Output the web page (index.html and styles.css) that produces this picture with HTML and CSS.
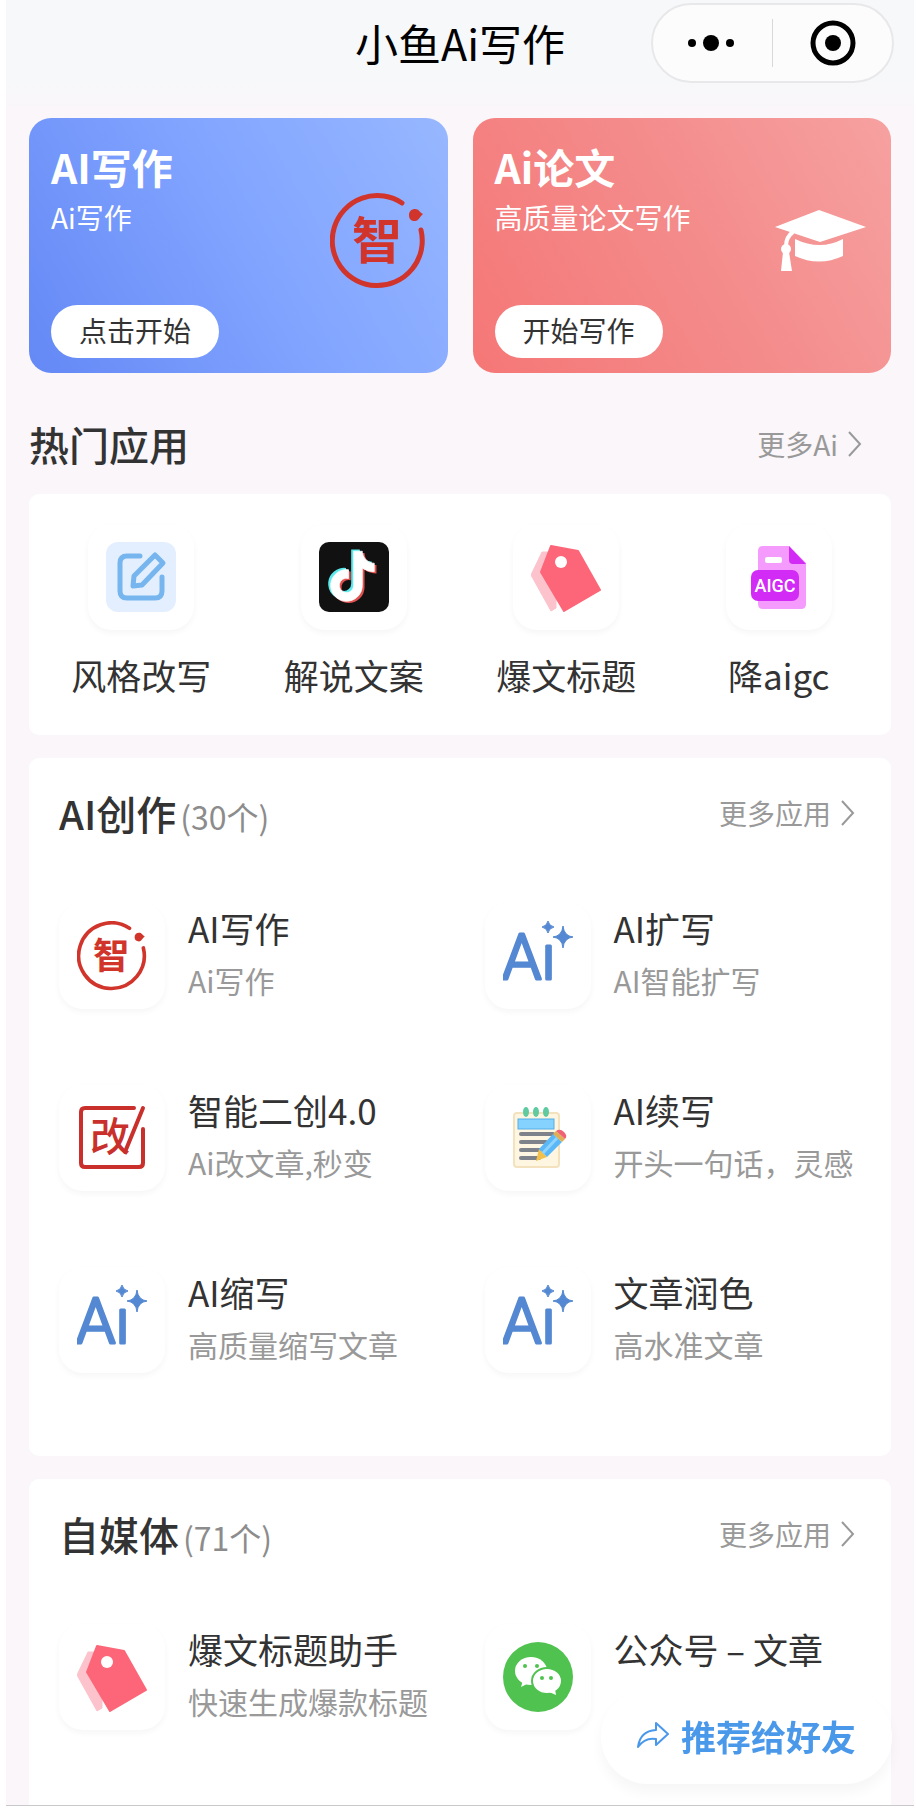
FILE: index.html
```html
<!DOCTYPE html>
<html lang="zh-CN">
<head>
  <meta charset="UTF-8" />
  <meta name="viewport" content="width=device-width, initial-scale=1.0"/>
  <title>小鱼Ai写作</title>
  <link rel="stylesheet" href="styles.css">
</head>
<body>
  <!-- shared icons -->
  <svg class="sprite" aria-hidden="true">
    <symbol id="icon-zhi" viewBox="0 0 96 96">
      <path d="M91 37A45 45 0 1 1 72 10" fill="none" stroke="#d0342a" stroke-width="5" stroke-linecap="round"/>
      <path d="M79 22c0-4 3-6 6-6 4 0 4 3 8 5-3 2-4 7-8 7s-6-2-6-6z" fill="#d0342a"/>
      <text class="seal-text" x="47" y="66" font-size="50" text-anchor="middle" fill="#d0342a">智</text>
    </symbol>
    <symbol id="icon-gai" viewBox="0 0 70 70">
      <path d="M57 5H8q-4 0-4 4v51q0 4 4 4h54q4 0 4-4V26M66 5L48 49" fill="none" stroke="#c9302c" stroke-width="4" stroke-linecap="round"/>
      <text class="edit-text" x="33" y="48" font-size="40" text-anchor="middle" fill="#c9302c">改</text>
    </symbol>
    <symbol id="icon-ai" viewBox="0 0 70 70">
      <text class="ai-text" x="-1" y="58" font-size="63">Aı</text>
      <path d="M60 5q1 10 10 11-9 1-10 11-1-10-10-11 9-1 10-11zM45 0q1 5 6 6-5 1-6 6-1-5-6-6 5-1 6-6z" fill="#5488d2" stroke="#5488d2"/>
    </symbol>
    <symbol id="icon-tag" viewBox="0 0 70 70">
      <path d="M11 10h14v56l-5 3L0 33z" fill="#fcc3cd" stroke="#fcc3cd" stroke-linejoin="round"/>
      <path d="M20 4l27 5 22 39-36 21L10 30z" fill="#fd6678" stroke="#fd6678" stroke-width="2" stroke-linejoin="round"/>
      <circle cx="30" cy="20" r="6" fill="#fff"/>
    </symbol>
    <symbol id="icon-chevron" viewBox="0 0 14 26">
      <path d="M1 1l11 12L1 25" fill="none" stroke="currentColor" stroke-width="2"/>
    </symbol>
  </svg>

  <div class="page">
    <header class="navbar">
      <h1>小鱼Ai写作</h1>
      <div class="capsule">
        <button type="button" aria-label="更多">
          <svg width="52" height="48" viewBox="0 0 52 48"><circle cx="5" cy="24" r="4"/><circle cx="24" cy="24" r="8"/><circle cx="43" cy="24" r="4"/></svg>
        </button>
        <button type="button" aria-label="关闭">
          <svg width="48" height="48" viewBox="0 0 48 48"><circle cx="24" cy="24" r="20" fill="none" stroke="#000" stroke-width="5"/><circle cx="24" cy="24" r="8"/></svg>
        </button>
      </div>
    </header>

    <main>
      <section class="banners">
        <article class="banner blue">
          <div class="banner-text">
            <h2>AI写作</h2>
            <p>Ai写作</p>
            <button type="button">点击开始</button>
          </div>
          <svg class="art"><use href="#icon-zhi"/></svg>
        </article>
        <article class="banner red">
          <div class="banner-text">
            <h2>Ai论文</h2>
            <p>高质量论文写作</p>
            <button type="button">开始写作</button>
          </div>
          <svg class="art" viewBox="0 0 96 96" fill="#fff">
            <path d="M2 34l44-17 47 17-46 15z"/>
            <path d="M22 46q25 12 48 0v17q-24 11-48 0z"/>
            <path d="M20 39q-7 5-7 14" fill="none" stroke="#fff" stroke-width="4"/>
            <circle cx="13" cy="56" r="5"/>
            <path d="M10 59h6l3 19H8z"/>
          </svg>
        </article>
      </section>

      <div class="section-head">
        <h2>热门应用</h2>
        <a class="more" href="#">更多Ai <svg><use href="#icon-chevron"/></svg></a>
      </div>

      <section class="panel hot">
        <a class="hot-item" href="#">
          <span class="tile">
            <svg viewBox="0 0 70 70">
              <rect width="70" height="70" rx="12" fill="#e3efff"/>
              <g fill="none" stroke="#76b5ee" stroke-width="5" stroke-linecap="round" stroke-linejoin="round">
                <path d="M34 14H21q-7 0-7 7v28q0 7 7 7h28q7 0 7-7V35"/>
                <path d="M49 13l8 8-21 22-9 1 1-10z"/>
              </g>
            </svg>
          </span>
          风格改写
        </a>
        <a class="hot-item" href="#">
          <span class="tile">
            <svg viewBox="0 0 70 70">
              <defs><path id="note" d="M19.59 6.69a4.83 4.83 0 0 1-3.77-4.25V2h-3.45v13.67a2.89 2.89 0 1 1-2.07-2.77V9.4a6.33 6.33 0 1 0 5.52 6.27V8.7a8.16 8.16 0 0 0 4.77 1.52V6.79a4.85 4.85 0 0 1-1-.1z"/></defs>
              <rect width="70" height="70" rx="10" fill="#111"/>
              <g transform="translate(3 4) scale(2.5)">
                <use href="#note" x="-.7" y="-.6" fill="#5ce9ec"/>
                <use href="#note" x="1.2" y=".8" fill="#e0504f"/>
                <use href="#note" x=".3" y=".1" fill="#fff" stroke="#fff" stroke-width=".3"/>
              </g>
            </svg>
          </span>
          解说文案
        </a>
        <a class="hot-item" href="#">
          <span class="tile"><svg><use href="#icon-tag"/></svg></span>
          爆文标题
        </a>
        <a class="hot-item" href="#">
          <span class="tile">
            <svg viewBox="0 0 70 70">
              <path d="M19 4h26l17 17v41q0 5-5 5H19q-5 0-5-5V9q0-5 5-5z" fill="#f49bfd"/>
              <path d="M45 4l17 18H49q-4 0-4-4z" fill="#d12bf5"/>
              <rect x="21" y="15" width="17" height="6" rx="2" fill="#fff"/>
              <rect x="7" y="28" width="48" height="31" rx="7" fill="#d12bf5"/>
              <text class="aigc-text" x="31" y="50" font-size="18" text-anchor="middle" fill="#fff">AIGC</text>
            </svg>
          </span>
          降aigc
        </a>
      </section>

      <section class="panel">
        <div class="panel-head">
          <h2>AI创作<small>(30个)</small></h2>
          <a class="more" href="#">更多应用 <svg><use href="#icon-chevron"/></svg></a>
        </div>
        <div class="apps">
          <a class="app" href="#">
            <span class="tile"><svg><use href="#icon-zhi"/></svg></span>
            <span class="app-text"><strong>AI写作</strong><em>Ai写作</em></span>
          </a>
          <a class="app" href="#">
            <span class="tile"><svg><use href="#icon-ai"/></svg></span>
            <span class="app-text"><strong>AI扩写</strong><em>AI智能扩写</em></span>
          </a>
          <a class="app" href="#">
            <span class="tile"><svg><use href="#icon-gai"/></svg></span>
            <span class="app-text"><strong>智能二创4.0</strong><em>Ai改文章,秒变</em></span>
          </a>
          <a class="app" href="#">
            <span class="tile">
              <svg viewBox="0 0 70 70">
                <rect x="11" y="10" width="45" height="54" rx="3" fill="#fff6e2" stroke="#f3e2bd" stroke-width="2"/>
                <g fill="#5fc9a0"><ellipse cx="23" cy="9" rx="3" ry="5"/><ellipse cx="33" cy="9" rx="3" ry="5"/><ellipse cx="43" cy="9" rx="3" ry="5"/></g>
                <rect x="15" y="16" width="36" height="10" fill="#86d2ff" stroke="#55aee8"/>
                <path d="M18 31h32M18 39h25M18 47h19M18 55h18" stroke="#7e838b" stroke-width="4" stroke-linecap="round"/>
                <path d="M33 58l3-12 8 8z" fill="#f3c14b"/>
                <path d="M36 46l14-15 9 8-15 15z" fill="#5ab8f8"/>
                <path d="M40 50l14-15" stroke="#8fd3ff" stroke-width="3"/>
                <path d="M50 31l3-3 9 8-3 3z" fill="#e0ae55"/>
                <path d="M53 28q4-3 8 1 4 4 1 7z" fill="#ee6274"/>
              </svg>
            </span>
            <span class="app-text"><strong>AI续写</strong><em>开头一句话，灵感</em></span>
          </a>
          <a class="app" href="#">
            <span class="tile"><svg><use href="#icon-ai"/></svg></span>
            <span class="app-text"><strong>AI缩写</strong><em>高质量缩写文章</em></span>
          </a>
          <a class="app" href="#">
            <span class="tile"><svg><use href="#icon-ai"/></svg></span>
            <span class="app-text"><strong>文章润色</strong><em>高水准文章</em></span>
          </a>
        </div>
      </section>

      <section class="panel last">
        <div class="panel-head">
          <h2>自媒体<small>(71个)</small></h2>
          <a class="more" href="#">更多应用 <svg><use href="#icon-chevron"/></svg></a>
        </div>
        <div class="apps">
          <a class="app" href="#">
            <span class="tile"><svg><use href="#icon-tag"/></svg></span>
            <span class="app-text"><strong>爆文标题助手</strong><em>快速生成爆款标题</em></span>
          </a>
          <a class="app" href="#">
            <span class="tile">
              <svg viewBox="0 0 70 70">
                <circle cx="35" cy="35" r="35" fill="#50c24f"/>
                <path d="M20 38l-2 7 8-4z" fill="#fff"/>
                <ellipse cx="28" cy="29" rx="16" ry="14" fill="#fff"/>
                <ellipse cx="44" cy="39" rx="15" ry="13" fill="#fff" stroke="#50c24f" stroke-width="2"/>
                <path d="M46 50l7 3-1-6z" fill="#fff"/>
                <g fill="#50c24f"><circle cx="22" cy="24" r="2"/><circle cx="34" cy="24" r="2"/><circle cx="39" cy="36" r="2"/><circle cx="48" cy="36" r="2"/></g>
              </svg>
            </span>
            <span class="app-text"><strong>公众号 – 文章</strong></span>
          </a>
        </div>
      </section>
    </main>
  </div>

  <button class="share" type="button">
    <svg width="32" height="26" viewBox="0 0 32 26"><path d="M1 25Q3 9 19 8V1l12 11-12 11v-6Q8 15 1 25z" fill="none" stroke="currentColor" stroke-width="2" stroke-linejoin="round"/></svg>
    推荐给好友
  </button>
</body>
</html>
```
FILE: styles.css
```css
* { box-sizing: border-box; margin: 0; padding: 0; }

body {
  font-family: 'Noto Sans CJK SC', sans-serif;
  color: #333;
  background: #fff;
}

a { color: inherit; text-decoration: none; }

button {
  font-family: inherit;
  border: none;
  cursor: pointer;
}

.sprite { display: none; }

.page {
  display: flex;
  flex-direction: column;
  min-height: calc(100vh - 2px);
  margin: 0 2px 0 6px;
  background: linear-gradient(#f7f8fa 80px, #faf6fa 110px);
  border-bottom: 1px solid #c9c9cb;
}

/* top bar */
.navbar {
  display: grid;
  grid-template-columns: 1fr auto 1fr;
  align-items: center;
  padding: 3px 20px 35px;
}

.navbar h1 {
  grid-column: 2;
  padding-bottom: 2px;
  font-size: 43px;
  font-weight: 400;
  line-height: 60px;
  color: #000;
}

.capsule {
  justify-self: end;
  display: flex;
  align-items: center;
  width: 243px;
  height: 80px;
  background: #fcfcfd;
  border: 2px solid #e8e8ea;
  border-radius: 40px;
}

.capsule button {
  display: flex;
  flex: 1;
  justify-content: center;
  background: none;
}

.capsule button + button { border-left: 1px solid #d8d8da; }

main {
  display: flex;
  flex-direction: column;
  flex: 1;
  padding: 0 23px;
}

/* banners */
.banners {
  display: grid;
  grid-template-columns: 1fr 1fr;
  gap: 25px;
}

.banner {
  display: flex;
  justify-content: space-between;
  min-height: 255px;
  padding: 26px 22px 15px;
  border-radius: 22px;
  color: #fff;
}

.blue { background: linear-gradient(60deg, #6488f5, #80a3ff 50%, #97b7ff); }
.red { background: linear-gradient(60deg, #f57776, #f48a8a 50%, #f6a1a0); }

.banner-text {
  display: flex;
  flex-direction: column;
  align-items: flex-start;
}

.banner h2 {
  font-size: 41px;
  line-height: 44px;
}

.banner p {
  margin-top: 11px;
  font-size: 28px;
  line-height: 36px;
}

.banner button {
  margin-top: auto;
  padding: 0 28px 2px;
  font-size: 28px;
  line-height: 51px;
  color: #333;
  background: #fff;
  border-radius: 27px;
}

.art {
  width: 96px;
  height: 96px;
  margin-top: 49px;
}

.seal-text { font-weight: 700; }
.edit-text { font-weight: 500; }

.ai-text {
  font-family: Roboto, sans-serif;
  font-weight: 300;
  fill: #5488d2;
  stroke: #5488d2;
  stroke-width: 3px;
  stroke-linejoin: round;
}

.aigc-text {
  font-family: Roboto, sans-serif;
  font-weight: 500;
}

/* headings */
.section-head,
.panel-head {
  display: flex;
  align-items: center;
  justify-content: space-between;
}

.section-head { padding: 43px 29px 22px 0; }
.panel-head { padding-right: 30px; }

.section-head h2,
.panel-head h2 {
  font-size: 40px;
  font-weight: 500;
  line-height: 56px;
}

.panel-head small {
  margin-left: 4px;
  font-size: 32px;
  font-weight: 400;
  line-height: 1;
  color: #8c8c8c;
}

.more {
  display: flex;
  align-items: center;
  gap: 10px;
  font-size: 28px;
  color: #999;
}

.more svg {
  width: 14px;
  height: 26px;
}

/* panels */
.panel {
  margin-bottom: 23px;
  padding: 27px 6px 82px 30px;
  background: #fff;
  border-radius: 10px;
}

.panel.hot {
  display: grid;
  grid-template-columns: repeat(4, 1fr);
  padding: 30px 6px 35px;
}

.panel.last {
  flex: 1;
  margin-bottom: 0;
  padding-bottom: 60px;
  border-radius: 10px 10px 0 0;
}

.hot-item {
  display: flex;
  flex-direction: column;
  align-items: center;
  gap: 20px;
  font-size: 35px;
  line-height: 50px;
}

.tile {
  display: flex;
  flex-shrink: 0;
  align-items: center;
  justify-content: center;
  width: 106px;
  height: 106px;
  border-radius: 24px;
  box-shadow: 0 3px 6px rgba(0,0,0,0.04);
}

.tile svg {
  width: 70px;
  height: 70px;
}

.apps {
  display: grid;
  grid-template-columns: 1fr 1fr;
  gap: 74px 25px;
  margin-top: 61px;
}

.app {
  display: flex;
  align-items: center;
  gap: 23px;
  min-height: 108px;
}

.app-text {
  display: flex;
  flex-direction: column;
  align-self: flex-start;
  gap: 2px;
  line-height: 51px;
  white-space: nowrap;
}

.app strong {
  font-size: 35px;
  font-weight: 400;
}

.app em {
  font-size: 30px;
  font-style: normal;
  color: #999;
}

/* floating share button */
.share {
  position: fixed;
  right: 24px;
  bottom: 24px;
  display: flex;
  align-items: center;
  gap: 12px;
  height: 94px;
  padding: 0 36px 4px;
  font-size: 35px;
  font-weight: 700;
  color: #4a98ea;
  background: #fff;
  border-radius: 47px;
  box-shadow: 0 8px 14px rgba(0,0,0,0.04);
}
```
